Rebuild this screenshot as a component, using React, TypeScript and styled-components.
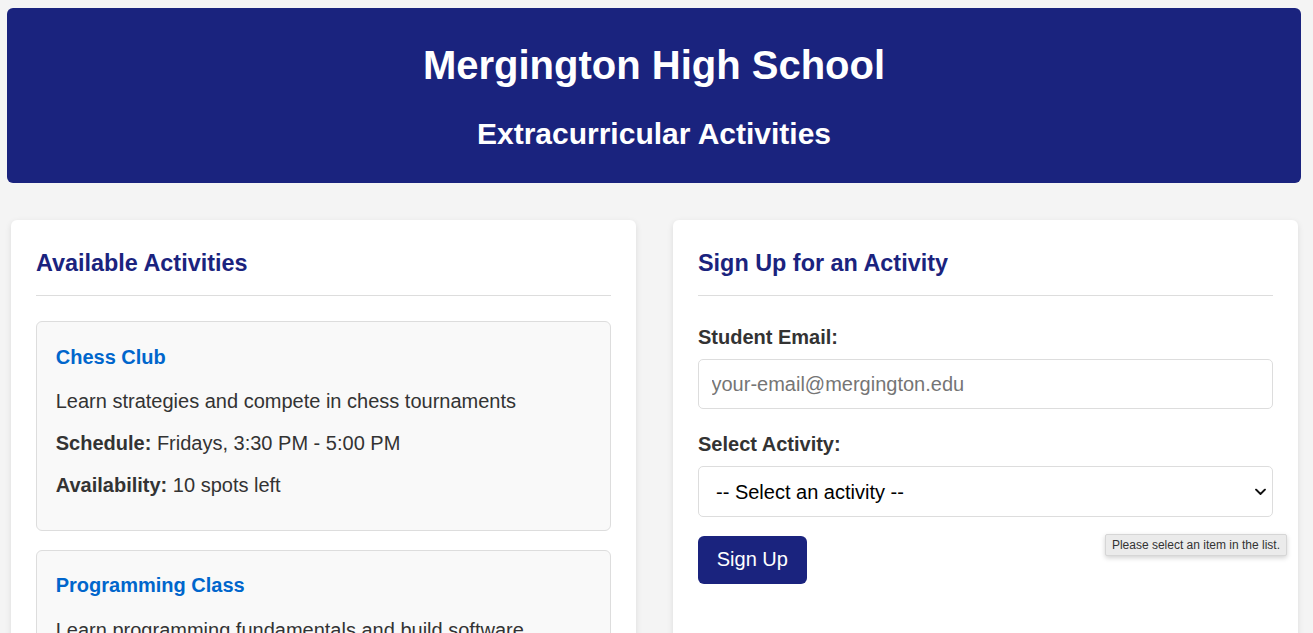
import React from "react";
import styled, { createGlobalStyle } from "styled-components";

const GlobalStyle = createGlobalStyle`
  * {
    box-sizing: border-box;
  }

  body {
    margin: 0;
    background: #f4f4f4;
    color: #333;
    font-family: "Liberation Sans", Arial, sans-serif;
    font-size: 20px;
    line-height: 1.6;
  }
`;

const Page = styled.div`
  padding: 8px 12px 0 7px;
`;

const Header = styled.header`
  background: #1a237e;
  color: #ffffff;
  text-align: center;
  padding: 25px 0;
  border-radius: 6px;
  margin-bottom: 37px;

  h1 {
    margin: 0 0 12.5px;
    font-size: 40px;
    line-height: 64px;
    font-weight: 700;
  }

  h2 {
    margin: 0;
    font-size: 30px;
    line-height: 48px;
    font-weight: 700;
  }
`;

const Main = styled.main`
  display: flex;
  gap: 37px;
  padding: 0 3px 0 4px;
`;

const Section = styled.section`
  flex: 1;
  max-width: 625px;
  background: #ffffff;
  padding: 25px;
  border-radius: 6px;
  box-shadow: 0 2.5px 6px rgba(0, 0, 0, 0.1);
`;

const SectionTitle = styled.h3`
  margin: 0 0 25px;
  padding-bottom: 13px;
  border-bottom: 1px solid #ddd;
  color: #1a237e;
  font-size: 23.4px;
  line-height: 1.6;
`;

const ActivityCard = styled.div`
  margin-bottom: 18.75px;
  padding: 18.75px;
  border: 1px solid #ddd;
  border-radius: 6px;
  background: #f9f9f9;

  h4 {
    margin: 0 0 12.5px;
    color: #0066cc;
    font-size: 20px;
    line-height: 32px;
  }

  p {
    margin: 0 0 10px;
  }
`;

const FormGroup = styled.div`
  margin-bottom: 18.75px;
`;

const Label = styled.label`
  display: block;
  margin-bottom: 6.25px;
  font-weight: 700;
`;

const TextInput = styled.input`
  width: 100%;
  height: 50px;
  padding: 0 12.5px;
  border: 1px solid #ddd;
  border-radius: 5px;
  font-family: inherit;
  font-size: 20px;
  color: #333;
  background: #fff;

  &::placeholder {
    color: #757575;
  }
`;

const SelectWrap = styled.div`
  position: relative;
`;

const Select = styled.select`
  width: 100%;
  height: 51px;
  padding: 0 30px 0 17px;
  border: 1px solid #ddd;
  border-radius: 5px;
  font-family: inherit;
  font-size: 20px;
  color: #000;
  background: #fff;
  appearance: none;
`;

const Chevron = styled.svg`
  position: absolute;
  right: 7px;
  top: 50%;
  transform: translateY(-50%);
  pointer-events: none;
`;

const Tooltip = styled.div`
  position: absolute;
  top: calc(100% + 17px);
  right: -14px;
  padding: 2px 6px;
  background: #ebebeb;
  border: 1px solid #d6d6d6;
  border-radius: 2px;
  box-shadow: 0 2px 5px rgba(0, 0, 0, 0.18);
  font-size: 12px;
  line-height: 16px;
  color: #333;
  white-space: nowrap;
`;

const SubmitButton = styled.button`
  background: #1a237e;
  color: #fff;
  border: none;
  padding: 12.5px 18.75px;
  font-family: inherit;
  font-size: 20px;
  line-height: 23px;
  border-radius: 6px;
  cursor: pointer;
`;

type Activity = {
  name: string;
  description: string;
  schedule: string;
  spots: number;
};

const activities: Activity[] = [
  {
    name: "Chess Club",
    description: "Learn strategies and compete in chess tournaments",
    schedule: "Fridays, 3:30 PM - 5:00 PM",
    spots: 10,
  },
  {
    name: "Programming Class",
    description: "Learn programming fundamentals and build software projects",
    schedule: "Tuesdays and Thursdays, 3:30 PM - 4:30 PM",
    spots: 18,
  },
  {
    name: "Gym Class",
    description: "Physical education and sports activities",
    schedule: "Mondays, Wednesdays, Fridays, 2:00 PM - 3:00 PM",
    spots: 28,
  },
];

const App: React.FC = () => {
  return (
    <Page>
      <GlobalStyle />
      <Header>
        <h1>Mergington High School</h1>
        <h2>Extracurricular Activities</h2>
      </Header>

      <Main>
        <Section>
          <SectionTitle>Available Activities</SectionTitle>
          {activities.map((a) => (
            <ActivityCard key={a.name}>
              <h4>{a.name}</h4>
              <p>{a.description}</p>
              <p>
                <strong>Schedule:</strong> {a.schedule}
              </p>
              <p>
                <strong>Availability:</strong> {a.spots} spots left
              </p>
            </ActivityCard>
          ))}
        </Section>

        <Section>
          <SectionTitle>Sign Up for an Activity</SectionTitle>
          <form onSubmit={(e) => e.preventDefault()}>
            <FormGroup>
              <Label htmlFor="email">Student Email:</Label>
              <TextInput
                id="email"
                type="email"
                placeholder="your-email@mergington.edu"
              />
            </FormGroup>
            <FormGroup>
              <Label htmlFor="activity">Select Activity:</Label>
              <SelectWrap>
                <Select id="activity" defaultValue="">
                  <option value="">-- Select an activity --</option>
                  {activities.map((a) => (
                    <option key={a.name} value={a.name}>
                      {a.name}
                    </option>
                  ))}
                </Select>
                <Chevron width="11" height="7" viewBox="0 0 11 7">
                  <path
                    d="M1 1l4.5 4.5L10 1"
                    fill="none"
                    stroke="#111"
                    strokeWidth="1.8"
                    strokeLinecap="round"
                    strokeLinejoin="round"
                  />
                </Chevron>
                <Tooltip>Please select an item in the list.</Tooltip>
              </SelectWrap>
            </FormGroup>
            <SubmitButton type="submit">Sign Up</SubmitButton>
          </form>
        </Section>
      </Main>
    </Page>
  );
};

export default App;
